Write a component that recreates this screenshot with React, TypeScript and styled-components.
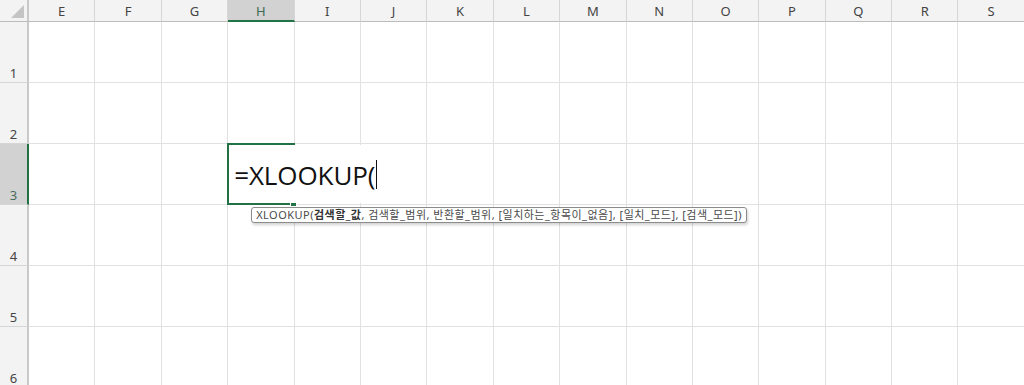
import styled, { createGlobalStyle } from "styled-components";

const GlobalStyle = createGlobalStyle`
  html, body {
    margin: 0;
    padding: 0;
    background: #ffffff;
    overflow: hidden;
  }
`;

const COLUMNS = ["E", "F", "G", "H", "I", "J", "K", "L", "M", "N", "O", "P", "Q", "R", "S"];
const ROWS = [1, 2, 3, 4, 5, 6];
const ACTIVE_COL = "H";
const ACTIVE_ROW = 3;

const GREEN = "#217346";

export default function App() {
  return (
    <>
      <GlobalStyle />
      <Sheet>
        <Corner>
          <CornerTriangle />
        </Corner>
        {COLUMNS.map((c) => (
          <ColHeader key={c} $active={c === ACTIVE_COL}>
            {c}
          </ColHeader>
        ))}
        {ROWS.map((r) => (
          <Row key={r} r={r} />
        ))}
      </Sheet>
    </>
  );
}

function Row({ r }: { r: number }) {
  return (
    <>
      <RowHeader $active={r === ACTIVE_ROW}>{r}</RowHeader>
      {COLUMNS.map((c) =>
        c === ACTIVE_COL && r === ACTIVE_ROW ? (
          <ActiveCell key={c + r}>
            <Selection>
              <FillHandle />
            </Selection>
            <Editor>
              <FormulaText>=XLOOKUP(</FormulaText>
              <Caret />
            </Editor>
            <Tooltip>
              XLOOKUP(<b>검색할_값</b>, 검색할_범위, 반환할_범위, [일치하는_항목이_없음],
              [일치_모드], [검색_모드])
            </Tooltip>
          </ActiveCell>
        ) : (
          <Cell key={c + r} />
        ),
      )}
    </>
  );
}

//style
const Sheet = styled.div`
  width: 1024px;
  height: 385px;
  overflow: hidden;
  background: #fff;
  font-family: "Noto Sans", "Open Sans", "Liberation Sans", sans-serif;
  display: grid;
  grid-template-columns: 29px repeat(15, 66.4px);
  grid-template-rows: 22px repeat(6, 61px);
`;

const Corner = styled.div`
  position: relative;
  background: #f3f3f3;
  border-right: 2px solid #c9c9c9;
  border-bottom: 1px solid #bcbcbc;
  box-sizing: border-box;
`;

const CornerTriangle = styled.div`
  position: absolute;
  right: 3px;
  bottom: 3px;
  width: 0;
  height: 0;
  border-left: 13px solid transparent;
  border-bottom: 13px solid #c4c4c4;
`;

const ColHeader = styled.div<{ $active?: boolean }>`
  display: flex;
  align-items: center;
  justify-content: center;
  box-sizing: border-box;
  background: ${(p) => (p.$active ? "#d2d2d2" : "#f3f3f3")};
  border-right: 1px solid #d6d6d6;
  border-bottom: ${(p) => (p.$active ? `2px solid ${GREEN}` : "1px solid #bcbcbc")};
  color: ${(p) => (p.$active ? "#3d6a52" : "#444")};
  font-size: 13px;
  padding-top: 1px;
`;

const RowHeader = styled.div<{ $active?: boolean }>`
  display: flex;
  align-items: flex-end;
  justify-content: center;
  box-sizing: border-box;
  background: ${(p) => (p.$active ? "#d2d2d2" : "#f3f3f3")};
  border-right: ${(p) => (p.$active ? `2px solid ${GREEN}` : "2px solid #c9c9c9")};
  border-bottom: 1px solid #d6d6d6;
  color: ${(p) => (p.$active ? "#4a6a5a" : "#444")};
  font-size: 13px;
  padding-bottom: 2px;
  line-height: 14px;
`;

const Cell = styled.div`
  box-sizing: border-box;
  border-right: 1px solid #e1e1e1;
  border-bottom: 1px solid #e1e1e1;
`;

const ActiveCell = styled(Cell)`
  position: relative;
  z-index: 2;
`;

const Selection = styled.div`
  position: absolute;
  inset: -1px -1px -1px -1px;
  box-sizing: border-box;
  border: 2px solid ${GREEN};
`;

const FillHandle = styled.div`
  position: absolute;
  right: -4px;
  bottom: -4px;
  width: 5px;
  height: 5px;
  background: ${GREEN};
  border: 1px solid #fff;
`;

const Editor = styled.div`
  position: absolute;
  left: 1px;
  top: 1px;
  width: 158px;
  height: 58px;
  background: #fff;
  display: flex;
  align-items: flex-end;
  padding: 0 0 13px 5px;
  box-sizing: border-box;
`;

const FormulaText = styled.span`
  font-family: "Open Sans", "Noto Sans", sans-serif;
  font-size: 26px;
  line-height: 30px;
  color: #111;
  letter-spacing: -0.1px;
`;

const Caret = styled.span`
  display: inline-block;
  width: 1px;
  height: 29px;
  background: #111;
  margin-left: 1px;
  margin-bottom: 1px;
`;

const Tooltip = styled.div`
  position: absolute;
  left: 23px;
  top: calc(100% + 3px);
  height: 16px;
  box-sizing: border-box;
  padding: 0 4px;
  background: #fff;
  border: 1px solid #8c8c8c;
  border-radius: 3px;
  box-shadow: 1px 2px 3px rgba(0, 0, 0, 0.18);
  font-family: "Noto Sans", "Noto Sans CJK KR", sans-serif;
  font-size: 11px;
  line-height: 14px;
  color: #4a4a4a;
  letter-spacing: 0.48px;
  white-space: nowrap;
  b {
    font-weight: 700;
    color: #333;
  }
`;
